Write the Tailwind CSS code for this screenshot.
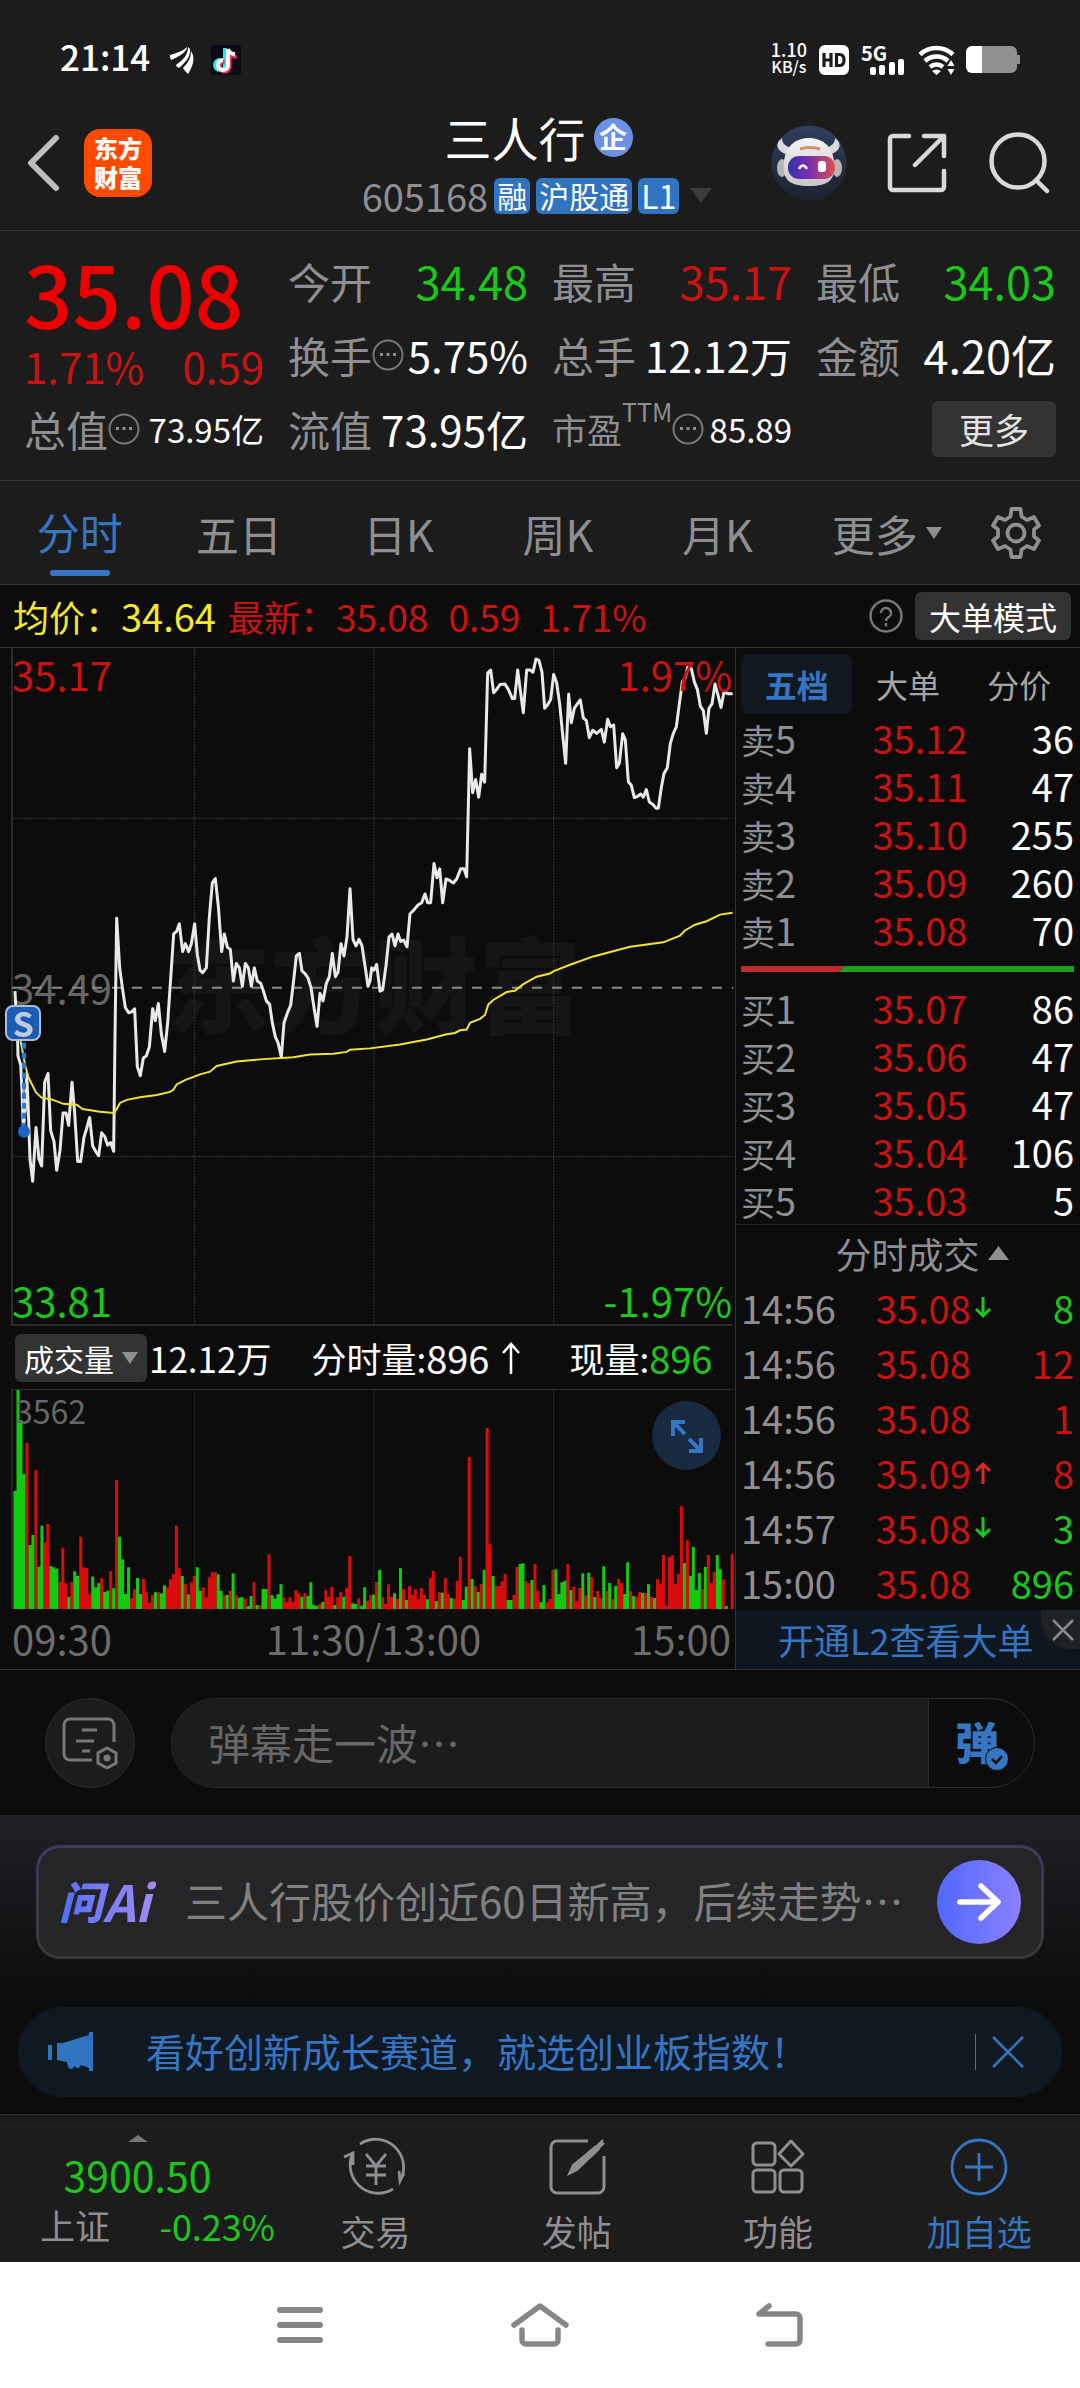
<!DOCTYPE html>
<html lang="zh-CN">
<head>
<meta charset="utf-8">
<meta name="viewport" content="width=device-width, initial-scale=1">
<title>三人行 605168</title>
<script src="https://cdn.jsdelivr.net/npm/@tailwindcss/browser@4"></script>
</head>
<body class="min-h-screen flex flex-col bg-[#0c0c0c] text-[#8e8e93] font-['Noto_Sans_CJK_SC','Noto_Sans',sans-serif]">

<header class="bg-[#1c1c1c] border-b border-[#333]">
  <!-- status bar -->
  <div class="h-24 pt-6 px-[60px] flex items-center justify-between text-white">
    <div class="flex items-center">
      <span class="text-[35px] leading-10 mb-2 font-medium">21:14</span>
      <svg class="ml-5 w-6 h-7" viewBox="0 0 24 28" fill="#fff"><path d="M0 9C7 7 13 5 17 1c0 4-6 9-16 13-1-2-1-3-1-5zM6 19C13 14 18 9 18 1l2 2c1 7-4 13-11 19-2-1-3-2-3-3zM13 22c5-5 8-10 8-17 4 6 3 14-3 23-2-2-4-4-5-6z"/></svg>
      <svg class="ml-[17px] w-[30px] h-[30px]" viewBox="0 0 30 30"><rect width="30" height="30" rx="2" fill="#090a14"/><g fill="none" stroke-width="4"><path d="M15 3v17a5 5 0 1 1-5-5" transform="translate(-1 0)" stroke="#25e8e6"/><path d="M18 5v16a5 5 0 1 1-5-5M18 5c1 4 3 6 7 6" transform="translate(.6 .8)" stroke="#f5315a"/><path d="M17 4v16a5 5 0 1 1-5-5M17 4c1 4 3 5 7 5" stroke="#fff"/></g></svg>
    </div>
    <div class="flex items-center">
      <div class="text-center font-medium text-[16px] leading-[17px] mb-1"><div class="text-[18px]">1.10</div><div>KB/s</div></div>
      <svg class="ml-3 w-[30px] h-[30px]" viewBox="0 0 30 30"><rect width="30" height="30" rx="6" fill="#fff"/><path d="M5 8v14M12 8v14M5 15h7M17.500 9.500h3q4.500 0 4.500 5.500t-4.500 5.500h-3z" fill="none" stroke="#1c1c1c" stroke-width="3.200"/></svg>
      <div class="ml-3 w-[45px] h-[30px] relative"><span class="absolute left-0 -top-1 text-[20px] leading-6 font-bold">5G</span>
        <svg class="w-full h-full" viewBox="0 0 45 30" fill="#fff"><rect x="9" y="22" width="6" height="8" rx="2"/><rect x="18" y="20" width="6" height="10" rx="2"/><rect x="28" y="17" width="6" height="13" rx="2"/><rect x="37" y="14" width="6" height="16" rx="2"/></svg></div>
      <svg class="ml-3 w-[38px] h-[30px]" viewBox="0 0 38 30"><g fill="none" stroke="#fff" stroke-width="4.500"><path d="M2 9.500a24 24 0 0 1 33 0"/><path d="M7 16a17 17 0 0 1 23 0"/><path d="M12 22a10 10 0 0 1 13 0"/></g><path d="M14 26q4.500-3 9 0l-4.500 4zM33 15l3.500 6h-7zM33 30l3.500-6h-7z" fill="#fff"/></svg>
      <svg class="ml-[10px] w-[54px] h-[28px]" viewBox="0 0 54 28"><path d="M16 0h29a6 6 0 0 1 6 6v3h3v9h-3v3a6 6 0 0 1-6 6H16z" fill="#909090"/><path d="M6 0h10v27H6a6 6 0 0 1-6-6V6a6 6 0 0 1 6-6z" fill="#fff"/></svg>
    </div>
  </div>
  <!-- title bar -->
  <div class="h-[134px] grid grid-cols-[1fr_auto_1fr] items-center pl-6 pr-[29px]">
    <div class="flex items-center gap-5">
      <button aria-label="返回"><svg class="w-10 h-[60px]" viewBox="0 0 40 60" fill="none" stroke="#bdbdbd" stroke-width="6" stroke-linecap="round" stroke-linejoin="round"><path d="M32 5L7 30l25 25"/></svg></button>
      <a href="#" class="w-[68px] h-[68px] rounded-2xl bg-[#ff4a00] text-white text-[24px] leading-[29px] pt-1 font-black text-center">东方<br>财富</a>
    </div>
    <div class="pt-2 text-center">
      <h1 class="flex items-center justify-center gap-2 pl-[2px] text-[47px] leading-[58px] text-white">三人行<span class="w-[39px] h-[39px] rounded-full bg-[#6a91e6] text-[28px] leading-9 font-bold">企</span></h1>
      <div class="flex items-center gap-[6px] leading-[60px]">
        <span class="text-[38px]">605168</span>
        <span class="h-9 px-[3px] rounded-md bg-[#3074c1] text-white text-[30px] leading-[34px]">融</span>
        <span class="h-9 px-[3px] rounded-md bg-[#3074c1] text-white text-[30px] leading-[34px]">沪股通</span>
        <span class="h-9 px-[3px] rounded-md bg-[#3074c1] text-white text-[32px] leading-[34px]">L1</span>
        <svg class="ml-1 w-6 h-4" viewBox="0 0 24 16" fill="#3c3c3c"><path d="M1 0h22L12 15z"/></svg>
      </div>
    </div>
    <div class="flex items-center justify-end gap-[40px]">
      <button aria-label="智能助手"><svg class="w-[76px] h-[76px]" viewBox="0 0 76 76"><defs><linearGradient id="v" x2="1"><stop stop-color="#3431a8"/><stop offset=".45" stop-color="#7a2fb0"/><stop offset="1" stop-color="#e0504a"/></linearGradient><linearGradient id="bg" x2="0" y2="1"><stop stop-color="#2f3e60"/><stop offset="1" stop-color="#1d222c"/></linearGradient><linearGradient id="hd" x2="0" y2="1"><stop stop-color="#f5f3f3"/><stop offset="1" stop-color="#c9c5c8"/></linearGradient></defs><circle cx="38" cy="38" r="37.500" fill="url(#bg)"/><path d="M14 29C5 25 4 18 11 13c0 6 4 8 9 10zM61 29c9-4 10-11 3-16 0 6-4 8-9 10z" fill="#dcd9dc"/><ellipse cx="11" cy="43" rx="5" ry="9" fill="#b7b3b8"/><ellipse cx="66" cy="43" rx="5" ry="9" fill="#b7b3b8"/><path d="M13 36C15 19 27 13 38 13s23 6 25 23c2 19-5 25-25 25S11 55 13 36z" fill="url(#hd)"/><path d="M29 24q9-3 20 0" stroke="#c9936c" stroke-width="3" fill="none"/><rect x="17" y="31" width="47" height="23" rx="11" fill="url(#v)"/><path d="M28 44q4-7 8 0" stroke="#fff" stroke-width="2.500" fill="none"/><rect x="47" y="36" width="8" height="11" rx="3" fill="#fff"/></svg></button>
      <button aria-label="分享"><svg class="w-[60px] h-[60px]" viewBox="0 0 60 60" fill="none" stroke="#d9d9d9" stroke-width="4.500" stroke-linecap="round" stroke-linejoin="round"><path d="M22 3H6a3 3 0 0 0-3 3v48a3 3 0 0 0 3 3h48a3 3 0 0 0 3-3V38M37 3h20v20M57 3L28 32"/></svg></button>
      <button aria-label="搜索"><svg class="w-[64px] h-[62px]" viewBox="0 0 64 62" fill="none" stroke="#d9d9d9" stroke-width="4.500" stroke-linecap="round"><circle cx="31" cy="29" r="26.500"/><path d="M49 48l11 11"/></svg></button>
    </div>
  </div>
</header>

<!-- quote summary -->
<section class="bg-[#1c1c1c] border-b border-[#333] px-6 pt-[13px] pb-[14px] h-[250px] grid grid-cols-4 gap-6 text-[42px] leading-[74px]">
  <div>
    <div class="text-[85px] leading-[96px] text-[#ec0000] font-medium">35.08</div>
    <div class="flex justify-between text-[42px] leading-[52px] text-[#cc1111]"><span>1.71%</span><span>0.59</span></div>
    <div class="flex justify-between"><span class="flex items-center">总值<svg class="w-8 h-8" viewBox="0 0 32 32"><circle cx="16" cy="16" r="14.500" fill="none" stroke="#777" stroke-width="2"/><path d="M8 14h3v3H8zM14.500 14h3v3h-3zM21 14h3v3h-3z" fill="#8e8e93"/></svg></span><span class="text-[33px] text-white">73.95亿</span></div>
  </div>
  <div>
    <div class="flex justify-between"><span>今开</span><span class="text-[45px] text-[#1ac81a]">34.48</span></div>
    <div class="flex justify-between"><span class="flex items-center">换手<svg class="w-8 h-8" viewBox="0 0 32 32"><circle cx="16" cy="16" r="14.500" fill="none" stroke="#777" stroke-width="2"/><path d="M8 14h3v3H8zM14.500 14h3v3h-3zM21 14h3v3h-3z" fill="#8e8e93"/></svg></span><span class="text-white">5.75%</span></div>
    <div class="flex justify-between"><span>流值</span><span class="text-white">73.95亿</span></div>
  </div>
  <div>
    <div class="flex justify-between"><span>最高</span><span class="text-[45px] text-[#cc1111]">35.17</span></div>
    <div class="flex justify-between"><span>总手</span><span class="text-white">12.12万</span></div>
    <div class="flex justify-between"><span class="flex items-center text-[35px]">市盈<span class="text-[25px] leading-[34px] mb-9">TTM</span><svg class="w-8 h-8" viewBox="0 0 32 32"><circle cx="16" cy="16" r="14.500" fill="none" stroke="#777" stroke-width="2"/><path d="M8 14h3v3H8zM14.500 14h3v3h-3zM21 14h3v3h-3z" fill="#8e8e93"/></svg></span><span class="text-[33px] text-white">85.89</span></div>
  </div>
  <div>
    <div class="flex justify-between"><span>最低</span><span class="text-[45px] text-[#1ac81a]">34.03</span></div>
    <div class="flex justify-between"><span>金额</span><span class="text-[45px] text-white">4.20亿</span></div>
    <div class="h-[74px] flex items-center justify-end"><button class="w-[124px] h-14 rounded-md bg-[#333] text-[#e4e4e4] text-[35px] leading-[50px]">更多</button></div>
  </div>
</section>

<!-- period tabs -->
<nav class="bg-[#1c1c1c] border-b border-[#333] h-[104px] pr-1 grid grid-cols-[repeat(6,4fr)_3fr] text-[43px] leading-[100px] text-center">
  <button class="flex flex-col items-center text-[#3575c2]"><span class="h-[89px]">分时</span><span class="w-[60px] h-[6px] rounded-full bg-[#3575c2]"></span></button>
  <button>五日</button>
  <button>日K</button>
  <button>周K</button>
  <button>月K</button>
  <button class="flex items-center justify-center gap-2 pl-5">更多<svg class="w-4 h-3" viewBox="0 0 16 12" fill="#8e8e93"><path d="M0 0h16L8 12z"/></svg></button>
  <button class="flex items-center justify-center" aria-label="设置"><svg class="w-[54px] h-[54px]" viewBox="0 0 54 54" fill="none" stroke="#8e8e93" stroke-width="3.800" stroke-linejoin="round"><path d="M22.500 3h9l1 7.500 5.500 3.500 7-3 5 8.500-5 4v7l5 4-5 8.500-7-3-5.500 3.500-1 7.500h-9l-1-7.500L16 40l-7 3-5-8.500 5-4v-7l-5-4L9 11l7 3 5.500-3.500z"/><circle cx="27" cy="27" r="8.500"/></svg></button>
</nav>

<!-- average / latest price -->
<div class="h-[63px] pl-[13px] pr-[9px] flex items-center justify-between border-b border-[#333]">
  <div class="flex text-[36px] leading-[56px] text-[#cc1111]">
    <span class="text-[#f5e92c]">均价：</span><span class="text-[38px] text-[#f5e92c] mr-3">34.64</span>
    <span>最新：</span><span class="text-[37px] mr-5">35.08</span><span class="text-[37px] mr-5">0.59</span><span class="text-[37px]">1.71%</span>
  </div>
  <div class="flex items-center gap-3">
    <button aria-label="说明"><svg class="w-[34px] h-[34px]" viewBox="0 0 34 34" fill="none" stroke="#777" stroke-width="2.500"><circle cx="17" cy="17" r="15.500"/><path d="M12 14a5 5 0 1 1 7 4.500q-2 1-2 3.500M17 24v3.500"/></svg></button>
    <button class="w-[156px] h-12 rounded-md bg-[#333] text-white text-[32px] leading-[44px]">大单模式</button>
  </div>
</div>

<main class="grid grid-cols-[735fr_345fr] border-b border-[#333]">
  <!-- charts -->
  <section class="min-w-0">
    <div class="relative h-[678px] text-[40px] leading-10">
      <div class="absolute left-[166px] top-[281px] text-[104px] leading-[104px] font-black text-[#151515] select-none">东方财富</div>
      <div class="absolute left-3 top-[319px] text-[#666]">34.49</div>
      <svg class="absolute inset-0 w-full h-full" viewBox="0 18 2205 1541" preserveAspectRatio="none" fill="none">
        <g stroke="#2c2c2c" stroke-width="2"><path d="M36 18V1557H2196" vector-effect="non-scaling-stroke"/></g>
        <g stroke="#333" stroke-width="1" stroke-dasharray="2 1"><path d="M584 18V1557M1122 18V1557M1661 18V1557M36 405H2200M36 1174H2200" vector-effect="non-scaling-stroke"/></g>
        <path d="M36 790H2200" stroke="#8a8a8a" stroke-width="2" stroke-dasharray="10 10" vector-effect="non-scaling-stroke"/>
        <path id="price" stroke="#e9e9e9" stroke-width="3" stroke-linejoin="round" vector-effect="non-scaling-stroke"/>
        <path id="avg" stroke="#f0e433" stroke-width="2" vector-effect="non-scaling-stroke"/>
        <path d="M72 915V1115" stroke="#2a7ad8" stroke-width="4" stroke-dasharray="6 4" vector-effect="non-scaling-stroke"/>
        <ellipse cx="72" cy="1117" rx="18" ry="14" fill="#1b63c4"/>
      </svg>
      <div class="absolute left-3 top-[6px] text-[#cc1111]">35.17</div>
      <div class="absolute right-[3px] top-[6px] text-[#cc1111]">1.97%</div>
      <div class="absolute left-3 bottom-[6px] text-[#1ac81a]">33.81</div>
      <div class="absolute right-[3px] bottom-[6px] text-[#1ac81a]">-1.97%</div>
      <div class="absolute left-[5px] top-[357px] w-9 h-9 rounded-lg border-2 border-[#a9bddd] bg-[#1a5cb5] text-[#bfcbe0] text-[34px] leading-[31px] font-bold text-center">S</div>
    </div>
    <div class="h-[63px] pl-[15px] flex items-center text-[35px] leading-[54px] text-white">
      <button class="h-12 w-[132px] rounded-md bg-[#333] flex items-center justify-center gap-2 text-[30px] leading-[44px]">成交量<svg class="w-4 h-3" viewBox="0 0 16 12" fill="#8e8e93"><path d="M0 0h16L8 12z"/></svg></button>
      <span class="ml-[2px]">12.12万</span>
      <span class="ml-10 flex items-center">分时量:<span class="text-[38px]">896</span><svg class="ml-3 w-5 h-9" viewBox="0 0 20 36" fill="none" stroke="#fff" stroke-width="2.500"><path d="M10 34V4M2 13l8-9 8 9"/></svg></span>
      <span class="ml-12 flex items-center">现量:<span class="text-[38px] text-[#1ac81a]">896</span></span>
    </div>
    <div class="relative h-[221px]">
      <svg class="absolute inset-0 w-full h-full" viewBox="0 177 2205 663" preserveAspectRatio="none" fill="none">
        <path d="M36 838V178H2200" stroke="#2c2c2c" stroke-width="1.500" vector-effect="non-scaling-stroke"/>
        <path d="M584 178V838M1122 178V838M1661 178V838" stroke="#333" stroke-width="1" stroke-dasharray="2 1" vector-effect="non-scaling-stroke"/>
        <path id="up" fill="#d80c0c"/>
        <path id="down" fill="#10cb10"/>
      </svg>
      <div class="absolute left-[15px] top-px text-[32px] leading-10 text-[#666]">3562</div>
      <button class="absolute right-[14px] top-3 w-[69px] h-[69px] rounded-full bg-[#182a40] flex items-center justify-center" aria-label="全屏"><svg class="w-9 h-9" viewBox="0 0 36 36" fill="none" stroke="#3575c2" stroke-width="4"><path d="M16 4H4v14M4 4l12 12M20 33h12V20M32 33L20 21"/></svg></button>
    </div>
    <div class="h-[58px] pl-3 pr-1 flex justify-between text-[40px] leading-[57px] text-[#6c6c6c]"><span>09:30</span><span class="pl-1">11:30/13:00</span><span>15:00</span></div>
  </section>

  <!-- order book and trades -->
  <section class="min-w-0 border-l border-[#333] flex flex-col">
    <div class="px-[5px] pt-[6px] grid grid-cols-3 text-[32px] leading-[58px] text-center text-[#a5a5a5]">
      <button class="h-[60px] rounded-lg bg-[#111820] text-[#3575c2] font-bold">五档</button>
      <button>大单</button>
      <button>分价</button>
    </div>
    <div class="pl-[5px] pr-[6px] text-[38px] leading-[46px]">
      <table class="w-full table-fixed text-right text-[#cc1111]">
        <colgroup><col class="w-[28%]"><col class="w-[40%]"><col class="w-[32%]"></colgroup>
        <tbody>
        <tr class="h-12"><th class="text-left font-normal text-[#8e8e93]"><span class="text-[34px] leading-10">卖</span>5</th><td>35.12</td><td class="text-white">36</td></tr>
        <tr class="h-12"><th class="text-left font-normal text-[#8e8e93]"><span class="text-[34px] leading-10">卖</span>4</th><td>35.11</td><td class="text-white">47</td></tr>
        <tr class="h-12"><th class="text-left font-normal text-[#8e8e93]"><span class="text-[34px] leading-10">卖</span>3</th><td>35.10</td><td class="text-white">255</td></tr>
        <tr class="h-12"><th class="text-left font-normal text-[#8e8e93]"><span class="text-[34px] leading-10">卖</span>2</th><td>35.09</td><td class="text-white">260</td></tr>
        <tr class="h-12"><th class="text-left font-normal text-[#8e8e93]"><span class="text-[34px] leading-10">卖</span>1</th><td>35.08</td><td class="text-white">70</td></tr>
        </tbody>
      </table>
      <svg class="my-3 w-full h-[6px] block" viewBox="0 0 333 6" preserveAspectRatio="none"><path d="M0 0h104l-6 6H0z" fill="#c02c2c"/><path d="M104 0h229v6H98z" fill="#1aa01a"/></svg>
      <table class="w-full table-fixed text-right text-[#cc1111]">
        <colgroup><col class="w-[28%]"><col class="w-[40%]"><col class="w-[32%]"></colgroup>
        <tbody>
        <tr class="h-12"><th class="text-left font-normal text-[#8e8e93]"><span class="text-[34px] leading-10">买</span>1</th><td>35.07</td><td class="text-white">86</td></tr>
        <tr class="h-12"><th class="text-left font-normal text-[#8e8e93]"><span class="text-[34px] leading-10">买</span>2</th><td>35.06</td><td class="text-white">47</td></tr>
        <tr class="h-12"><th class="text-left font-normal text-[#8e8e93]"><span class="text-[34px] leading-10">买</span>3</th><td>35.05</td><td class="text-white">47</td></tr>
        <tr class="h-12"><th class="text-left font-normal text-[#8e8e93]"><span class="text-[34px] leading-10">买</span>4</th><td>35.04</td><td class="text-white">106</td></tr>
        <tr class="h-12"><th class="text-left font-normal text-[#8e8e93]"><span class="text-[34px] leading-10">买</span>5</th><td>35.03</td><td class="text-white">5</td></tr>
        </tbody>
      </table>
    </div>
    <button class="h-14 border-t border-[#222] flex items-center justify-center gap-2 pl-7 text-[36px] leading-[54px]">分时成交<svg class="w-[21px] h-[14px]" viewBox="0 0 21 14" fill="#8e8e93"><path d="M0 14h21L10.500 0z"/></svg></button>
    <div class="pl-[5px] pr-[6px] text-[38px] leading-[52px]">
      <table class="w-full table-fixed text-right text-[#cc1111]">
        <colgroup><col class="w-[32%]"><col class="w-[37%]"><col class="w-[6%]"><col class="w-[25%]"></colgroup>
        <tbody>
        <tr class="h-[55px]"><td class="text-left text-[#8e8e93]">14:56</td><td>35.08</td><td><svg class="ml-auto w-4 h-6" viewBox="0 0 16 24" fill="none" stroke="#1ac81a" stroke-width="3"><path d="M8 1v19M1 13l7 7 7-7"/></svg></td><td class="text-[#1ac81a]">8</td></tr>
        <tr class="h-[55px]"><td class="text-left text-[#8e8e93]">14:56</td><td>35.08</td><td></td><td>12</td></tr>
        <tr class="h-[55px]"><td class="text-left text-[#8e8e93]">14:56</td><td>35.08</td><td></td><td>1</td></tr>
        <tr class="h-[55px]"><td class="text-left text-[#8e8e93]">14:56</td><td>35.09</td><td><svg class="ml-auto w-4 h-6" viewBox="0 0 16 24" fill="none" stroke="#dc2a2a" stroke-width="3"><path d="M8 23V3M1 10l7-7 7 7"/></svg></td><td>8</td></tr>
        <tr class="h-[55px]"><td class="text-left text-[#8e8e93]">14:57</td><td>35.08</td><td><svg class="ml-auto w-4 h-6" viewBox="0 0 16 24" fill="none" stroke="#1ac81a" stroke-width="3"><path d="M8 1v19M1 13l7 7 7-7"/></svg></td><td class="text-[#1ac81a]">3</td></tr>
        <tr class="h-[55px]"><td class="text-left text-[#8e8e93]">15:00</td><td>35.08</td><td></td><td class="text-[#1ac81a]">896</td></tr>
        </tbody>
      </table>
    </div>
    <div class="flex-1 relative bg-[#0f161f]">
      <a href="#" class="block pl-[42px] text-[36px] leading-[59px] text-[#3575c2]">开通L2查看大单</a>
      <button class="absolute right-0 top-0 w-[39px] h-[39px] rounded-bl-[30px] bg-[#1d2226] flex items-center justify-center" aria-label="关闭"><svg class="w-[22px] h-[22px] ml-1" viewBox="0 0 22 22" stroke="#8a8a8a" stroke-width="2.500"><path d="M1 1l20 20M21 1L1 21"/></svg></button>
    </div>
  </section>
</main>

<!-- live comments -->
<form class="px-[45px] pt-7 pb-[27px] flex gap-9">
  <button type="button" class="w-[90px] h-[90px] rounded-full bg-[#1c1c1c] border border-[#2c2c2c] flex items-center justify-center" aria-label="弹幕设置"><svg class="w-[56px] h-[52px]" viewBox="0 0 56 52" fill="none" stroke="#777" stroke-width="3"><path d="M30 43H8a6 6 0 0 1-6-6V8a6 6 0 0 1 6-6h38a6 6 0 0 1 6 6v17M20 13h15M14 24h18M20 34h8M45 31l9 5v10l-9 5-9-5V36z"/><circle cx="45" cy="41" r="2" fill="#777"/></svg></button>
  <div class="flex-1 h-[90px] rounded-full border border-[#2c2c2c] overflow-hidden flex">
    <input aria-label="弹幕" placeholder="弹幕走一波…" class="min-w-0 flex-1 h-full pl-9 pb-1 bg-[#1c1c1c] text-[42px] text-white placeholder:text-[#666] border-r border-[#2c2c2c] outline-none">
    <button type="button" class="w-[105px] pl-[26px] pb-1 relative text-left text-[44px] leading-[80px] font-black text-[#3575c2]">弹<svg class="absolute left-[56px] top-[48px] w-6 h-6" viewBox="0 0 24 24"><circle cx="12" cy="12" r="11.500" fill="#3575c2" stroke="#0c0c0c"/><path d="M7 12l4 4 6-7" fill="none" stroke="#0c0c0c" stroke-width="2.500"/></svg></button>
  </div>
</form>

<!-- AI question -->
<section class="bg-linear-to-b from-[#201f26] to-[#0c0c0c] px-9 pt-[30px] pb-12">
  <div class="rounded-3xl p-[3px] bg-linear-to-b from-[#3b3b5e] to-[#3b3836]">
    <a href="#" class="h-[108px] rounded-[21px] bg-[#252527] flex items-center px-5">
      <span class="shrink-0 w-[102px] text-[44px] leading-[56px] mb-1 font-black italic flex items-center bg-linear-to-r from-[#4f6dff] to-[#a98bf0] bg-clip-text text-transparent">问<span class="text-[50px] font-bold">Ai</span></span>
      <span class="flex-1 ml-6 text-[42px] leading-[60px] mb-1 text-[#808080] whitespace-nowrap">三人行股价创近60日新高，后续走势…</span>
      <span class="shrink-0 w-[84px] h-[84px] rounded-full bg-linear-to-r from-[#5068ff] to-[#8a80ff] flex items-center justify-center"><svg class="w-11 h-10" viewBox="0 0 44 40" fill="none" stroke="#fff" stroke-width="5.500" stroke-linecap="round" stroke-linejoin="round"><path d="M3 20h38M24 4l17 16-17 16"/></svg></span>
    </a>
  </div>
</section>

<!-- announcement -->
<div class="mx-[18px] mb-[17px] h-[90px] rounded-full bg-[#101922] pl-[30px] pr-[38px] flex items-center text-[#3575c2]">
  <svg class="w-[46px] h-10" viewBox="0 0 46 40" fill="#3074c1"><path d="M0 13h4v15H0zM9 11h6L41 3V0h4v39h-4v-3l-8-3q-3 6-6 1l-3 3q-4 1-5-7L9 28z"/></svg>
  <a href="#" class="ml-[52px] mb-1 flex-1 text-[39px] leading-[56px] whitespace-nowrap">看好创新成长赛道，就选创业板指数！</a>
  <span class="w-px h-9 bg-[#3575c2] mr-4"></span>
  <button aria-label="关闭公告"><svg class="w-8 h-8" viewBox="0 0 32 32" stroke="#3575c2" stroke-width="2.500"><path d="M1 1l30 30M31 1L1 31"/></svg></button>
</div>

<!-- bottom toolbar -->
<footer class="border-t border-[#333] bg-[#1c1c1c]">
  <div class="mt-[11px] border-t border-[#252525] h-[136px] grid grid-cols-[275px_repeat(4,1fr)] text-[35px] leading-10">
    <a href="#" class="text-center">
      <svg class="mx-auto mt-2 w-5 h-[7px]" viewBox="0 0 20 7" fill="#777"><path d="M0 7h20L10 0z"/></svg>
      <div class="mt-2 text-[41px] leading-12 text-[#1ac81a]">3900.50</div>
      <div class="mt-[5px] pl-10 flex justify-between leading-[44px]"><span>上证</span><span class="text-[36px] text-[#1ac81a]">-0.23%</span></div>
    </a>
    <button class="flex flex-col items-center pt-2"><svg class="w-[66px] h-[64px]" viewBox="0 0 66 64" fill="none" stroke="#8e8e93" stroke-width="2.800"><path d="M17 9A28 28 0 0 1 57 46M61 38l-4 8-1-10M50 54A28 28 0 0 1 10 18M1 22l9-4v12M23 19l10 12 10-12M33 31v19M23 31h20M23 40h20"/></svg><span class="mt-3">交易</span></button>
    <button class="flex flex-col items-center pt-2"><svg class="w-[58px] h-[64px]" viewBox="0 0 58 64" fill="none" stroke="#8e8e93" stroke-width="3"><path d="M40 6H9a6 6 0 0 0-6 6v40a6 6 0 0 0 6 6h41a6 6 0 0 0 6-6V21"/><path d="M21 39l4-9L48 11l3 3-22 21zM50 10l5-5" stroke-width="2" fill="#8e8e93"/><path d="M50 12l5-5" stroke-width="5"/></svg><span class="mt-3">发帖</span></button>
    <button class="flex flex-col items-center pt-2"><svg class="w-[56px] h-[64px]" viewBox="0 0 56 64" fill="none" stroke="#8e8e93" stroke-width="3" stroke-linejoin="round"><rect x="3" y="8" width="22" height="22" rx="4"/><rect x="3" y="35" width="22" height="22" rx="4"/><rect x="30" y="35" width="22" height="22" rx="4"/><path d="M41 6l12 13-12 12-12-12z"/></svg><span class="mt-3">功能</span></button>
    <button class="flex flex-col items-center pt-2 text-[#3575c2]"><svg class="w-[64px] h-[64px]" viewBox="0 0 64 64" fill="none" stroke="#3575c2" stroke-width="2.800"><circle cx="32" cy="32" r="27"/><path d="M32 18v28M18 32h28"/></svg><span class="mt-3">加自选</span></button>
  </div>
</footer>

<!-- system navigation -->
<div class="flex-1 min-h-[126px] bg-white px-45 grid grid-cols-3 items-center justify-items-center">
  <button aria-label="菜单"><svg class="w-[46px] h-[38px]" viewBox="0 0 46 38" stroke="#868686" stroke-width="6" stroke-linecap="round"><path d="M3 4h40M3 19h40M3 34h40"/></svg></button>
  <button aria-label="主页"><svg class="w-[60px] h-[46px]" viewBox="0 0 60 46" fill="none" stroke="#868686" stroke-width="5.500" stroke-linecap="round" stroke-linejoin="round"><path d="M4 23L30 4l26 19M12 28v10a4 4 0 0 0 4 4h28a4 4 0 0 0 4-4V28"/></svg></button>
  <button aria-label="返回上一级"><svg class="w-[50px] h-[46px]" viewBox="0 0 50 46" fill="none" stroke="#868686" stroke-width="5.500" stroke-linecap="round" stroke-linejoin="round"><path d="M14 4L4 12h37a4 4 0 0 1 4 4v22a4 4 0 0 1-4 4H13"/></svg></button>
</div>

<script>
// intraday price and running average, as x,y pairs in chart units
const morning = "45,798 48,850 52,880 54,945 62,965 66,1020 70,1115 76,1060 80,985 84,1050 90,1180 98,1230 108,1108 117,1180 125,1195 134,1005 144,985 152,1115 162,1140 170,1205 180,1160 189,1075 198,1075 206,1103 216,1005 224,1075 233,1185 242,1185 252,1130 260,1110 269,1085 278,1150 287,1162 296,1172 305,1120 314,1128 323,1148 332,1142 341,1162 345,900 350,632 359,745 368,795 376,835 386,847 395,845 404,838 412,970 421,990 430,950 439,945 448,925 458,838 466,865 475,826 484,895 494,935 503,870 512,770 521,668 530,662 538,645 548,708 556,690 566,708 574,690 584,645 592,715 600,750 608,756 619,745 628,630 637,552 646,542 655,605 665,708 673,668 682,698 691,703 700,775 709,735 718,745 727,787 736,735 745,745 754,787 763,745 772,775 782,780 790,797 799,820 809,828 817,870 826,902 834,915 844,948 852,870 862,848 872,830 880,780 889,718 898,712 906,752 915,758 924,768 933,790 943,840 951,878 960,803 969,820 979,780 988,765 997,712 1006,765 1014,755 1023,690 1032,718 1041,675 1050,565 1059,680 1068,695 1077,680 1086,695 1096,745 1104,787";
const afternoon = "0,775 5,745 12,750 20,737 30,798 38,795 48,740 57,675 66,668 75,695 84,668 92,685 101,682 111,697 120,622 130,615 144,602 155,597 165,577 173,597 182,597 192,508 201,540 209,520 218,597 228,543 240,547 250,552 260,543 272,520 282,520 290,538 299,247 308,347 317,317 326,357 335,305 344,323 353,75 362,68 371,120 380,112 390,101 405,100 415,112 427,133 434,133 443,68 452,120 460,165 470,68 480,68 489,73 498,43 507,46 516,73 524,155 533,147 542,135 551,78 560,97 569,145 578,215 587,280 596,123 604,188 613,155 622,145 631,136 640,177 649,183 658,222 668,205 680,212 694,203 703,232 713,180 721,197 731,193 740,290 748,280 758,213 766,227 775,322 784,330 793,358 803,355 812,350 820,357 829,340 838,368 848,373 858,382 865,382 874,335 882,303 892,290 901,235 910,212 919,197 928,145 937,95 946,85 953,62 964,65 973,95 982,112 991,150 1000,160 1009,212 1017,155 1026,145 1035,100 1044,125 1053,153 1062,118 1075,122 1088,122";
const avgMorning = "45,850 55,880 64,920 75,965 85,993 96,1010 108,1028 125,1040 155,1044 190,1054 230,1056 248,1066 300,1072 341,1075 350,1066 360,1052 380,1045 420,1039 470,1034 510,1027 520,1022 530,1010 555,1000 600,987 630,981 650,968 710,958 780,953 880,948 930,942 1000,940 1040,936 1050,931";
const avgAfternoon = "0,928 90,919 170,908 230,896 255,893 270,887 290,885 300,870 330,861 345,852 355,828 370,818 410,800 435,797 460,782 500,765 540,758 550,753 600,738 670,719 780,697 880,687 930,672 945,660 975,647 1010,639 1050,624 1088,620";
const line = (a, b) => "M" + a.split(" ").concat(b.split(" ").map(p => { const [x, y] = p.split(","); return (+x + 1110) + "," + y; })).join("L");
document.getElementById("price").setAttribute("d", line(morning, afternoon));
document.getElementById("avg").setAttribute("d", line(avgMorning, avgAfternoon));

// volume per minute: direction and top edge of the bar
const volume = "g483 g180 g270 g432 r338 g645 g615 r420 g710 g587 r637 r582 g708 g712 g716 r755 r653 r760 g800 r757 g724 g738 r620 r712 r714 r792 g740 g772 g760 r745 g786 g782 r723 g775 r450 g620 g688 g792 g712 r805 r778 g744 g792 r747 r787 r818 r795 g787 r787 g790 g766 r772 r748 r733 r587 r715 g738 r763 g793 r757 r738 g712 g783 r772 r802 r742 r727 r727 g733 g782 r796 g795 r782 g730 r795 g803 g802 r806 g828 g798 r757 g825 r826 g777 g777 r673 g795 g806 g793 g763 r802 r817 r802 r815 r780 r790 g800 r790 g798 g757 g824 g828 r822 g816 r780 r800 r770 g825 r802 r785 g800 r773 r678 g820 g822 r805 g827 g772 r812 r796 g794 r756 g720 r802 r822 r763 r800 g790 r806 g715 r777 g810 r768 r795 r778 r807 r774 r795 g808 r744 r722 g813 r785 g788 r744 r792 g804 r806 r752 r680 g810 g770 r381 g747 r768 g786 r762 g720 r294 r643 g738 r768 r768 r754 r732 g810 g810 r795 r711 g702 g700 r754 r760 g750 r702 r783 g817 g765 r817 r807 r720 g718 g792 g757 g752 r702 g780 r770 r814 r774 g730 r796 g728 r741 g801 r783 r803 g709 r783 g759 r806 g768 r747 r759 g792 g697 r783 g798 r800 r786 g789 r789 g763 r800 g804 r748 r762 r675 r827 r681 r676 r762 r732 r528 g699 r631 g737 g651 g780 g729 r777 g711 r675 r759 r726 g675 g718 r748 g828 r837 r672".split(" ");
const bars = { r: "", g: "" };
volume.forEach((v, i) => { bars[v[0]] += `M${(40.5 + i * 8.965).toFixed(1)} 837V${v.slice(1)}h9V837z`; });
document.getElementById("up").setAttribute("d", bars.r);
document.getElementById("down").setAttribute("d", bars.g);
</script>
</body>
</html>
